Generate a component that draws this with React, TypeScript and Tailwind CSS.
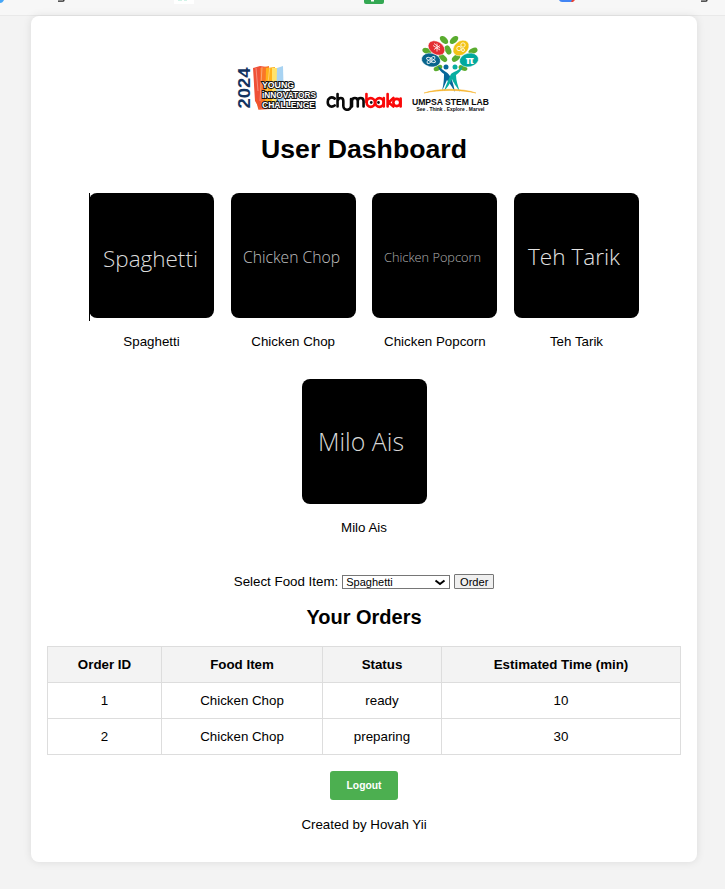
import React from "react";

type Food = { name: string; x: number; y: number; width: number; size: number; color: string };

const foods: Food[] = [
  { name: "Spaghetti", x: 14, y: 74, width: 95, size: 22, color: "#dcdcdc" },
  { name: "Chicken Chop", x: 12, y: 70, width: 97, size: 16.5, color: "#c0c0c0" },
  { name: "Chicken Popcorn", x: 12, y: 68.5, width: 97, size: 13, color: "#b0b0b0" },
  { name: "Teh Tarik", x: 14, y: 71.5, width: 92, size: 22.5, color: "#e2e2e2" },
  { name: "Milo Ais", x: 16, y: 72, width: 86, size: 25, color: "#d8d8d8" },
];

const orders = [
  { id: 1, item: "Chicken Chop", status: "ready", time: 10 },
  { id: 2, item: "Chicken Chop", status: "preparing", time: 30 },
];

function BrowserStrip() {
  return (
    <svg className="block h-4 w-full shrink-0" viewBox="0 0 725 16">
      <rect width="725" height="16" fill="#f7f7f7" />
      <path d="M0 15.5H725" stroke="#e9e9e9" />
      <path d="M0 0H4C3 2 2 3 0 3Z" fill="#46a6f7" />
      <path d="M58 1.2H62.5Q64 1.2 64 0M701 1.2H705.5Q707 1.2 707 0" fill="none" stroke="#222" strokeWidth="1.3" />
      <rect x="174" width="20" height="4" fill="white" />
      <path d="M178 .5H182M184 .5H187" stroke="#d3f3e8" />
      <path d="M364 0H384V2Q384 4 382 4H366Q364 4 364 2Z" fill="#34a853" />
      <path d="M371 0H374V1.5H371Z" fill="white" />
      <path d="M559 0H574L572 2H562Q560 2 559 0Z" fill="#4285f4" />
      <path d="M572 0H575L573 2H571Z" fill="#ea4335" />
    </svg>
  );
}

function InnovatorsLogo() {
  return (
    <svg className="h-[80px] w-[84px]" viewBox="0 0 84 80">
      <text transform="translate(13.5 77.5) rotate(-90)" textLength="41" lengthAdjust="spacingAndGlyphs" fill="#123360" className="font-['Liberation_Sans',Arial,sans-serif] text-[17px] font-bold">2024</text>
      <path d="M17 37L24 35L31 36L28 76L24 78L19 70Z" fill="#ef5037" />
      <path d="M24 37L33 35L32 76L25 77Z" fill="#fa7627" />
      <path d="M30 37L39 36V75L29 76Z" fill="#ffb21b" />
      <path d="M36 37H42V74L36 75Z" fill="#ffe36c" />
      <path d="M41 37L47 35L48 74L40 75Z" fill="#a8d3f2" />
      <path d="M20 37L22 60M26 36L24 70M34 35L31 60" stroke="#fff" strokeWidth=".7" opacity=".5" />
      <path d="M20 67L23 78L38 77" fill="none" stroke="#f15a2b" strokeWidth="1.5" />
      <g fill="white" stroke="#151515" strokeWidth="2.2" paintOrder="stroke" strokeLinejoin="miter" className="font-['Liberation_Sans',Arial,sans-serif] text-[9px] font-bold">
        <text x="26" y="56.5" textLength="32" lengthAdjust="spacingAndGlyphs">YOUNG</text>
        <text x="26" y="66.5" textLength="54" lengthAdjust="spacingAndGlyphs">iNNOVATORS</text>
        <text x="26" y="76.5" textLength="53" lengthAdjust="spacingAndGlyphs">CHALLENGE</text>
      </g>
    </svg>
  );
}

function ChumbakaLogo() {
  return (
    <svg className="h-[80px] w-[78px]" viewBox="0 0 81 80" preserveAspectRatio="none" fill="none" strokeWidth="2.7" strokeLinecap="round" strokeLinejoin="round" aria-label="chumbaka">
      <g stroke="#080808">
        <path d="M9 67.5C5 65 1.8 67.5 1.8 71C1.8 75.5 6 76.5 9 74.5M12 63V75.5M12 70C13 66 18 66 18 70V75C18 80 26 80 26 75V68M27 75.5V70C27 66 33 66 33 70V75.5M33 70C33 66 39 66 39 70V75.5" />
      </g>
      <g stroke="#fa0808">
        <path d="M42 63V71" />
        <circle cx="46.5" cy="71.5" r="4.3" />
        <circle cx="55.5" cy="71.5" r="4.3" />
        <path d="M60 67V75.5M64 63V75.5M70 67L65 71.5L70 75.5" />
        <circle cx="73.5" cy="71.5" r="3.6" />
        <path d="M77.5 67.5V75.5" />
      </g>
      <circle cx="47" cy="71.5" r="1.4" fill="#111" />
      <circle cx="54.5" cy="71.5" r="1.4" fill="#111" />
    </svg>
  );
}

function StemLogo() {
  return (
    <svg className="h-[80px] w-[80px] overflow-visible" viewBox="0 0 80 80">
      <g transform="translate(1 0)">
        <g fill="#5aac2f">
          <ellipse cx="31" cy="9" rx="5" ry="3" transform="rotate(42 31 9)" />
          <ellipse cx="41" cy="9" rx="5" ry="3" transform="rotate(-40 41 9)" />
          <ellipse cx="35" cy="19" rx="4.8" ry="3" transform="rotate(65 35 19)" />
          <ellipse cx="14" cy="20" rx="4.8" ry="2.8" transform="rotate(20 14 20)" />
          <ellipse cx="60" cy="20" rx="4.8" ry="2.8" transform="rotate(-25 60 20)" />
          <ellipse cx="30" cy="27" rx="5" ry="2.8" transform="rotate(42 30 27)" />
          <ellipse cx="43" cy="27" rx="4.8" ry="2.8" transform="rotate(-40 43 27)" />
          <ellipse cx="25" cy="37" rx="4.6" ry="2.5" transform="rotate(-25 25 37)" />
          <ellipse cx="50" cy="37" rx="4.6" ry="2.5" transform="rotate(20 50 37)" />
        </g>
        <g stroke="white" strokeWidth=".5">
          <ellipse cx="18" cy="29" rx="9.6" ry="6.8" transform="rotate(12 18 29)" fill="#07648c" />
          <ellipse cx="23.5" cy="17" rx="9" ry="6.4" transform="rotate(32 23.5 17)" fill="#e42c32" />
          <ellipse cx="48" cy="17" rx="9" ry="6.7" transform="rotate(-42 48 17)" fill="#f2c316" />
          <ellipse cx="56" cy="29" rx="9.6" ry="6.8" transform="rotate(-12 56 29)" fill="#00a99d" />
        </g>
        <g fill="none" stroke="white" strokeWidth=".8">
          <ellipse cx="18" cy="29" rx="5" ry="1.7" transform="rotate(25 18 29)" />
          <ellipse cx="18" cy="29" rx="5" ry="1.7" transform="rotate(-40 18 29)" />
          <circle cx="18" cy="29" r="1" />
          <path d="M20 14.5L27 19M21 18.5L27 14.5M24 12.5V20.5M21 12.5L27 17" />
          <circle cx="46" cy="17.5" r="2.2" /><circle cx="50" cy="14" r="2.2" /><circle cx="50" cy="19" r="1.5" />
        </g>
        <text x="52.5" y="32.5" fill="white" className="font-['DejaVu_Sans',sans-serif] text-[11px] font-bold">π</text>
        <circle cx="33" cy="36" r="2.5" fill="#07679a" />
        <circle cx="42" cy="36" r="2.5" fill="#08aea1" />
        <path d="M25 35C29 38 31 40 33 41C38 44 40 51 42 61C39 56 36 51 34 49L29 60C31 52 31 46 31 43C28 41 26 39 25 35Z" fill="#07679a" />
        <path d="M50 34C49 39 46 42 43 44C43 50 45 55 47 61C43 55 40 51 39 48C37 53 34 57 31 60C34 52 36 47 38 43C40 41 46 40 50 34Z" fill="#08aea1" />
      </g>
      <path d="M12 62C27 57 50 57 64 62C49 58.6 27 58.6 12 62Z" fill="#f7b52e" stroke="#f7b52e" strokeWidth=".5" />
      <g fill="#0a0a0a" className="font-['Liberation_Sans',Arial,sans-serif] font-bold">
        <text x="0" y="74" textLength="77" lengthAdjust="spacingAndGlyphs" className="text-[9.4px]">UMPSA STEM LAB</text>
        <text x="4.5" y="79.5" textLength="68" lengthAdjust="spacingAndGlyphs" className="text-[5px]">See . Think . Explore . Marvel</text>
      </g>
    </svg>
  );
}

function FoodCard({ food, first }: { food: Food; first: boolean }) {
  return (
    <div className="relative w-[125px]">
      {first && <span className="absolute top-0 left-0 h-32 w-px bg-black" />}
      <svg className="block size-[125px] rounded-lg bg-black" viewBox="0 0 125 125">
        <text x={food.x} y={food.y} fill={food.color} fontSize={food.size} textLength={food.width} lengthAdjust="spacingAndGlyphs" className="font-['Open_Sans','Noto_Sans',sans-serif] font-light">{food.name}</text>
      </svg>
      <p className="mt-4 h-[45px] text-center leading-[15px]">{food.name}</p>
    </div>
  );
}

export default function App() {
  return (
    <div className="flex h-[889px] w-[725px] flex-col overflow-hidden bg-[#f3f3f3] font-['Liberation_Sans',Arial,sans-serif] text-[13.333px] text-black">
      <BrowserStrip />
      <main className="ml-[31px] h-[846px] w-[666px] rounded-[8px] bg-white px-4 shadow-[0_0_8px_rgba(0,0,0,0.1)]">
        <header className="flex h-[95px] items-end pl-[189px]">
          <InnovatorsLogo />
          <div className="ml-[6px]"><ChumbakaLogo /></div>
          <div className="ml-2"><StemLogo /></div>
        </header>
        <h1 className="mt-[23px] text-center text-[26.667px] leading-[30px] font-bold">User Dashboard</h1>
        <section className="mt-[29px] flex h-[372px] flex-wrap content-start justify-center gap-x-[16.67px]">
          {foods.map((food, index) => <FoodCard key={food.name} food={food} first={index === 0} />)}
        </section>
        <form className="mt-[9px] flex h-4 items-start justify-center gap-1" onSubmit={(event) => event.preventDefault()}>
          <label htmlFor="food" className="leading-4">Select Food Item:</label>
          <div className="relative mt-px h-[14px] w-[108px]">
            <select id="food" className="block h-[14px] w-full appearance-none rounded-none border border-[#767676] bg-white pl-[3px] text-[11px] leading-[12px]">
              {foods.map((food) => <option key={food.name}>{food.name}</option>)}
            </select>
            <svg className="pointer-events-none absolute top-[4px] right-[4px] h-[7px] w-[12px]" viewBox="0 0 12 7"><path d="M1.5 1.5L6 5L10.5 1.5" fill="none" stroke="black" strokeWidth="2" /></svg>
          </div>
          <button className="h-[15px] w-10 rounded-[1px] border border-[#767676] bg-[#efefef] text-[11.111px] leading-[14px]">Order</button>
        </form>
        <h2 className="mt-4 text-center text-[20px] leading-[23px] font-bold">Your Orders</h2>
        <table className="mt-[17px] w-[633px] table-fixed border-collapse text-center leading-[15px]">
          <colgroup><col className="w-[114px]" /><col className="w-[161px]" /><col className="w-[119px]" /><col className="w-[239px]" /></colgroup>
          <thead>
            <tr className="h-9 bg-[#f3f3f3]">
              {["Order ID", "Food Item", "Status", "Estimated Time (min)"].map((label) => <th key={label} className="border border-[#ddd] p-0 font-bold">{label}</th>)}
            </tr>
          </thead>
          <tbody>
            {orders.map((order) => (
              <tr key={order.id} className="h-9">
                {[order.id, order.item, order.status, order.time].map((value, index) => <td key={index} className="border border-[#ddd] p-0">{value}</td>)}
              </tr>
            ))}
          </tbody>
        </table>
        <div className="mt-4 flex justify-center"><button className="h-[29px] w-[68px] rounded-[3px] bg-[#4caf50] pt-px text-[10.3px] font-bold text-white">Logout</button></div>
        <p className="mt-[17px] text-center leading-[15px]">Created by Hovah Yii</p>
      </main>
    </div>
  );
}
